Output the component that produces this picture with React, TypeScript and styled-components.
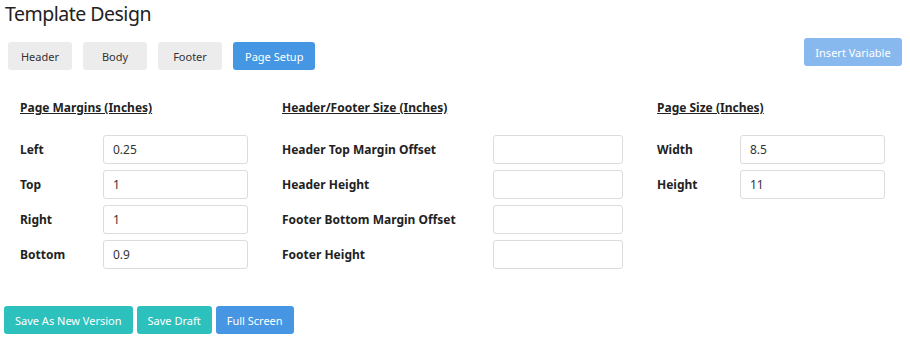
import React from "react";
import styled, { createGlobalStyle } from "styled-components";

const GlobalStyle = createGlobalStyle`
  html, body {
    margin: 0;
    padding: 0;
    background: #ffffff;
  }
  body {
    font-family: "Noto Sans", "Open Sans", Arial, sans-serif;
    color: #333333;
  }
`;

// Page wrapper
const Page = styled.div`
  width: 910px;
  height: 349px;
  box-sizing: border-box;
  padding: 0 4px;
  overflow: hidden;
`;

const Title = styled.h2`
  margin: 0;
  padding: 0 1px;
  font-size: 19.5px;
  letter-spacing: -0.5px;
  line-height: 28px;
  font-weight: 400;
  color: #222;
`;

// Tab bar
const TabBar = styled.div`
  display: flex;
  justify-content: space-between;
  align-items: flex-start;
  margin-top: 10px;
  padding: 0 4px;
`;

const Tabs = styled.div`
  display: flex;
  gap: 11px;
  padding-top: 4px;
`;

const Tab = styled.button<{ active?: boolean }>`
  height: 28px;
  min-width: 64px;
  padding: 0 12px;
  border: none;
  border-radius: 3px;
  font-family: inherit;
  font-size: 11px;
  background: ${({ active }) => (active ? "#4597e4" : "#ececec")};
  color: ${({ active }) => (active ? "#ffffff" : "#333333")};
  cursor: pointer;
`;

const InsertButton = styled.button`
  height: 28px;
  width: 98px;
  border: none;
  border-radius: 3px;
  font-family: inherit;
  font-size: 11px;
  background: #87b9ef;
  color: #ffffff;
`;

// Settings sections
const Sections = styled.div`
  display: grid;
  grid-template-columns: 228px 341px 228px;
  column-gap: 34px;
  padding-left: 16px;
  margin-top: 30px;
`;

const Section = styled.div<{ labelWidth: number }>`
  display: grid;
  grid-template-columns: ${({ labelWidth }) => `${labelWidth}px 1fr`};
  grid-auto-rows: 29px;
  row-gap: 6px;
  align-items: center;
`;

const SectionHeading = styled.div`
  grid-column: 1 / -1;
  font-size: 12px;
  font-weight: 700;
  text-decoration: underline;
  line-height: 16px;
  margin-bottom: 17px;
  align-self: start;
  color: #222;
`;

const Label = styled.label`
  font-size: 12px;
  font-weight: 700;
  color: #222;
`;

const Input = styled.input`
  box-sizing: border-box;
  width: 100%;
  height: 29px;
  padding: 0 9px;
  border: 1px solid #dcdcdc;
  border-radius: 3px;
  font-family: inherit;
  font-size: 12px;
  color: #333;
  outline: none;
`;

// Footer actions
const Actions = styled.div`
  display: flex;
  gap: 4px;
  margin-top: 37px;
`;

const ActionButton = styled.button<{ variant: "teal" | "blue" }>`
  height: 28px;
  padding: 0 11px;
  border: none;
  border-radius: 3px;
  font-family: inherit;
  font-size: 11px;
  color: #ffffff;
  background: ${({ variant }) => (variant === "teal" ? "#2cc1bd" : "#4696e4")};
`;

type Field = { label: string; value: string };

const margins: Field[] = [
  { label: "Left", value: "0.25" },
  { label: "Top", value: "1" },
  { label: "Right", value: "1" },
  { label: "Bottom", value: "0.9" },
];

const headerFooter: Field[] = [
  { label: "Header Top Margin Offset", value: "" },
  { label: "Header Height", value: "" },
  { label: "Footer Bottom Margin Offset", value: "" },
  { label: "Footer Height", value: "" },
];

const pageSize: Field[] = [
  { label: "Width", value: "8.5" },
  { label: "Height", value: "11" },
];

function FieldSection({ title, fields, labelWidth }: { title: string; fields: Field[]; labelWidth: number }) {
  return (
    <Section labelWidth={labelWidth}>
      <SectionHeading>{title}</SectionHeading>
      {fields.map((f) => (
        <React.Fragment key={f.label}>
          <Label>{f.label}</Label>
          <Input defaultValue={f.value} />
        </React.Fragment>
      ))}
    </Section>
  );
}

export default function App() {
  return (
    <>
      <GlobalStyle />
      <Page>
        <Title>Template Design</Title>
        <TabBar>
          <Tabs>
            <Tab>Header</Tab>
            <Tab>Body</Tab>
            <Tab>Footer</Tab>
            <Tab active>Page Setup</Tab>
          </Tabs>
          <InsertButton>Insert Variable</InsertButton>
        </TabBar>
        <Sections>
          <FieldSection title="Page Margins (Inches)" fields={margins} labelWidth={83} />
          <FieldSection title="Header/Footer Size (Inches)" fields={headerFooter} labelWidth={211} />
          <FieldSection title="Page Size (Inches)" fields={pageSize} labelWidth={83} />
        </Sections>
        <Actions>
          <ActionButton variant="teal">Save As New Version</ActionButton>
          <ActionButton variant="teal">Save Draft</ActionButton>
          <ActionButton variant="blue">Full Screen</ActionButton>
        </Actions>
      </Page>
    </>
  );
}
